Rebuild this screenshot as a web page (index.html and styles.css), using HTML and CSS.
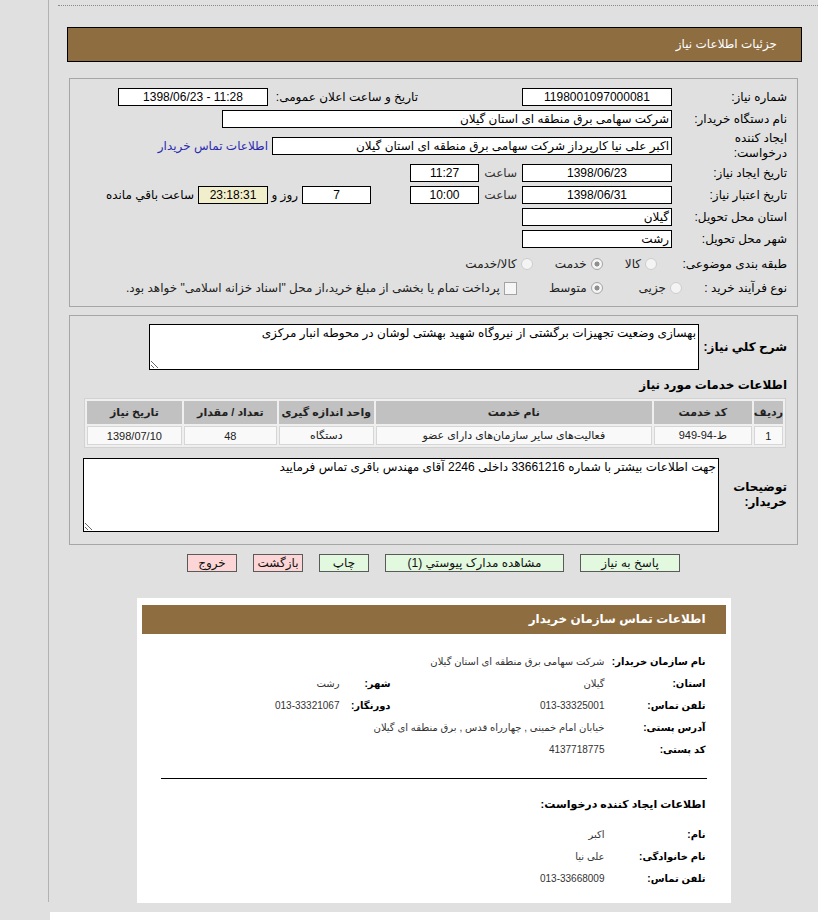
FILE: index.html
```html
<!DOCTYPE html>
<html lang="fa" dir="rtl">
<head>
<meta charset="utf-8">
<title>جزئیات اطلاعات نیاز</title>
<link rel="stylesheet" href="styles.css">
</head>
<body>
<div class="shell">
  <div class="dots"></div>
  <div class="title-bar">جزئیات اطلاعات نیاز</div>

  <div class="panel panel-info">
    <div class="row">
      <span class="lbl">شماره نیاز:</span>
      <span class="box w150 center">1198001097000081</span>
      <span class="lbl-announce">تاریخ و ساعت اعلان عمومی:</span>
      <span class="box w150 center ltr">1398/06/23 - 11:28</span>
    </div>
    <div class="row">
      <span class="lbl">نام دستگاه خریدار:</span>
      <span class="box w450">شرکت سهامی برق منطقه ای استان گیلان</span>
    </div>
    <div class="row row-tall">
      <span class="lbl">ایجاد کننده<br>درخواست:</span>
      <span class="box w400">اکبر علی نیا کارپرداز شرکت سهامی برق منطقه ای استان گیلان</span>
      <a class="contact-link" href="#">اطلاعات تماس خریدار</a>
    </div>
    <div class="row">
      <span class="lbl">تاریخ ایجاد نیاز:</span>
      <span class="box w150 center">1398/06/23</span>
      <span class="unit">ساعت</span>
      <span class="box w69 center">11:27</span>
    </div>
    <div class="row">
      <span class="lbl">تاریخ اعتبار نیاز:</span>
      <span class="box w150 center">1398/06/31</span>
      <span class="unit">ساعت</span>
      <span class="box w69 center">10:00</span>
      <span class="box w69 center days">7</span>
      <span class="unit-days">روز و</span>
      <span class="box w70 center timer">23:18:31</span>
      <span class="remain">ساعت باقي مانده</span>
    </div>
    <div class="row">
      <span class="lbl">استان محل تحویل:</span>
      <span class="box w150">گیلان</span>
    </div>
    <div class="row">
      <span class="lbl">شهر محل تحویل:</span>
      <span class="box w150">رشت</span>
    </div>
    <div class="row row-radio">
      <span class="lbl">طبقه بندی موضوعی:</span>
      <span class="opt opt-first"><span class="radio"></span><span class="opt-text">کالا</span></span>
      <span class="opt"><span class="radio checked"></span><span class="opt-text">خدمت</span></span>
      <span class="opt"><span class="radio"></span><span class="opt-text">کالا/خدمت</span></span>
    </div>
    <div class="row row-radio2">
      <span class="lbl lbl-short">نوع فرآیند خرید :</span>
      <span class="opt opt-flush"><span class="radio"></span><span class="opt-text">جزیی</span></span>
      <span class="opt opt-wide"><span class="radio checked"></span><span class="opt-text">متوسط</span></span>
      <span class="opt opt-check"><span class="checkbox"></span><span class="opt-text">پرداخت تمام یا بخشی از مبلغ خرید،از محل "اسناد خزانه اسلامی" خواهد بود.</span></span>
    </div>
  </div>

  <div class="panel panel-desc">
    <div class="desc-row">
      <span class="lbl-bold lbl-desc">شرح کلي نیاز:</span>
      <textarea class="area area-desc" readonly>بهسازی وضعیت تجهیزات برگشتی از نیروگاه شهید بهشتی لوشان در محوطه انبار مرکزی</textarea>
    </div>
    <div class="section-title">اطلاعات خدمات مورد نیاز</div>
    <table class="items">
      <thead>
        <tr>
          <th class="c-idx">ردیف</th>
          <th class="c-code">کد خدمت</th>
          <th class="c-name">نام خدمت</th>
          <th class="c-unit">واحد اندازه گیری</th>
          <th class="c-qty">تعداد / مقدار</th>
          <th class="c-date">تاریخ نیاز</th>
        </tr>
      </thead>
      <tbody>
        <tr>
          <td>1</td>
          <td>ط-94-949</td>
          <td>فعالیت‌های سایر سازمان‌های دارای عضو</td>
          <td>دستگاه</td>
          <td>48</td>
          <td>1398/07/10</td>
        </tr>
      </tbody>
    </table>
    <div class="desc-row desc-row2">
      <span class="lbl-bold lbl-buyer">توضیحات<br>خریدار:</span>
      <textarea class="area area-buyer" readonly>جهت اطلاعات بیشتر با شماره 33661216 داخلی 2246 آقای مهندس باقری تماس فرمایید</textarea>
    </div>
  </div>

  <div class="buttons">
    <span class="btn btn-green w100">پاسخ به نیاز</span>
    <span class="btn btn-green w179">مشاهده مدارک پیوستي (1)</span>
    <span class="btn btn-green w50">چاپ</span>
    <span class="btn btn-pink w50">بازگشت</span>
    <span class="btn btn-pink w50">خروج</span>
  </div>

  <div class="contact">
    <div class="contact-head">اطلاعات تماس سازمان خریدار</div>
    <div class="contact-grid">
      <div class="c-row"><span class="c-lbl">نام سازمان خریدار:</span><span class="c-val">شرکت سهامی برق منطقه ای استان گیلان</span></div>
      <div class="c-row"><span class="c-lbl">استان:</span><span class="c-val c-val1">گیلان</span><span class="c-lbl2">شهر:</span><span class="c-val">رشت</span></div>
      <div class="c-row"><span class="c-lbl">تلفن تماس:</span><span class="c-val c-val1">013-33325001</span><span class="c-lbl2">دورنگار:</span><span class="c-val">013-33321067</span></div>
      <div class="c-row"><span class="c-lbl">آدرس پستی:</span><span class="c-val">خیابان امام خمینی , چهارراه قدس , برق منطقه ای گیلان</span></div>
      <div class="c-row"><span class="c-lbl">کد پستی:</span><span class="c-val">4137718775</span></div>
    </div>
    <div class="c-rule"></div>
    <div class="c-subhead">اطلاعات ایجاد کننده درخواست:</div>
    <div class="contact-grid grid2">
      <div class="c-row"><span class="c-lbl">نام:</span><span class="c-val">اکبر</span></div>
      <div class="c-row"><span class="c-lbl">نام خانوادگی:</span><span class="c-val">علی نیا</span></div>
      <div class="c-row"><span class="c-lbl">تلفن تماس:</span><span class="c-val">013-33668009</span></div>
    </div>
  </div>
</div>
<div class="footer"></div>
</body>
</html>
```

FILE: styles.css
```css
html, body {
  margin: 0;
  padding: 0;
  background: #e0e0e0;
  height: 920px;
  overflow: hidden;
}

body {
  font-family: "Liberation Sans", "DejaVu Sans", sans-serif;
  font-size: 12px;
  color: #000;
}

.shell {
  margin-left: 48px;
  border-left: 1px solid #b2b2b2;
  height: 902px;
  box-sizing: border-box;
  padding-top: 5px;
}

.dots {
  margin-left: 9px;
  border-top: 1px dotted #8a8a8a;
}

.title-bar {
  margin: 21px 16px 0 18px;
  height: 33px;
  line-height: 33px;
  border: 1px solid #000;
  background: #8e6d41;
  color: #fff;
  padding-right: 24px;
  font-size: 12px;
}

.panel {
  margin: 0 20px;
  border: 1px solid #a6a6a6;
  padding-right: 10px;
  padding-left: 10px;
}

.panel-info {
  margin-top: 16px;
  padding-top: 7px;
  padding-bottom: 8px;
}

.row {
  display: flex;
  align-items: center;
  height: 22px;
  white-space: nowrap;
}

.row-tall { height: 32px; }
.row-radio { height: 28px; }
.row-radio2 { height: 20px; }

.lbl {
  width: 115px;
  flex: none;
  line-height: 15px;
}

.lbl-short { width: 105px; }

.box {
  flex: none;
  box-sizing: border-box;
  height: 18px;
  line-height: 16px;
  border: 1px solid #000;
  background: #fff;
  padding: 0 2px;
  overflow: hidden;
}

.center { text-align: center; }
.ltr { direction: ltr; }
.w150 { width: 150px; }
.w450 { width: 450px; }
.w400 { width: 400px; }
.w69 { width: 69px; }
.w70 { width: 70px; }

.lbl-announce {
  flex: none;
  width: 146px;
  margin-right: 104px;
  margin-left: 4px;
}

.contact-link {
  margin-right: 4px;
  color: #2a2ab0;
  text-decoration: none;
}

.unit {
  flex: none;
  width: 43px;
  box-sizing: border-box;
  padding-right: 5px;
  color: #333;
}

.days { margin-right: 39px; }

.unit-days {
  flex: none;
  width: 34px;
  box-sizing: border-box;
  padding-right: 4px;
}

.timer { background: #f0eecb; }

.remain {
  margin-right: 4px;
}

.opt {
  display: flex;
  align-items: center;
  margin-right: 22px;
}

.opt-first { margin-right: 15px; }
.opt-flush { margin-right: 0; }
.opt-wide { margin-right: 36px; }
.opt-check { margin-right: 32px; }

.opt-text {
  margin-right: 4px;
  color: #222;
}

.radio {
  display: inline-block;
  width: 12px;
  height: 12px;
  box-sizing: border-box;
  border-radius: 50%;
  border: 1px solid #cdcdcd;
  background: #f4f4f4;
}

.radio.checked {
  border-color: #a5a5a5;
  background: radial-gradient(circle, #8f8f8f 0 2.2px, #f4f4f4 2.8px);
}

.checkbox {
  display: inline-block;
  width: 13px;
  height: 13px;
  box-sizing: border-box;
  border: 1px solid #a3a3a3;
  background: #f6f6f6;
}

.panel-desc {
  margin-top: 8px;
  padding-top: 8px;
  padding-bottom: 12px;
}

.desc-row {
  display: flex;
  align-items: center;
}

.lbl-bold {
  font-weight: bold;
  font-size: 12px;
  line-height: 15px;
}

.lbl-desc { width: 88px; flex: none; }
.lbl-buyer { width: 68px; flex: none; }

.area {
  display: block;
  box-sizing: border-box;
  border: 1px solid #000;
  background: #fff;
  font-family: "Liberation Sans", "DejaVu Sans", sans-serif;
  font-size: 12px;
  line-height: 15px;
  padding: 1px 2px;
  margin: 0;
  resize: both;
  overflow: hidden;
  color: #000;
}

.area-desc { width: 550px; height: 46px; }
.area-buyer { width: 636px; height: 74px; }

.section-title {
  margin-top: 7px;
  height: 16px;
  line-height: 16px;
  font-weight: bold;
}

.items {
  margin-top: 5px;
  margin-right: 1px;
  width: 702px;
  border-collapse: separate;
  border-spacing: 2px;
  border: 1px solid #d2d2d2;
  background: #efefef;
  font-size: 11px;
}

.items th {
  background: #c1c1c1;
  height: 23px;
  padding: 0;
  font-weight: bold;
  color: #222;
}

.items td {
  background: #f9f9f9;
  height: 17px;
  padding: 0;
  text-align: center;
  border: 1px solid #d6d6d6;
  color: #222;
}

.c-idx { width: 24px; }
.c-code { width: 98px; }
.c-name { width: 276px; }
.c-unit { width: 95px; }
.c-qty { width: 93px; }

.desc-row2 { margin-top: 10px; }

.buttons {
  margin-top: 9px;
  display: flex;
  justify-content: center;
  gap: 16px;
}

.btn {
  box-sizing: border-box;
  height: 18px;
  line-height: 16px;
  border: 1px solid #5a5a5a;
  text-align: center;
  font-size: 12px;
  color: #111;
}

.btn-green { background: #e2f9e0; }
.btn-pink { background: #fcd6d6; }
.w100 { width: 100px; }
.w179 { width: 179px; }
.w50 { width: 50px; }

.contact {
  margin: 26px auto 0;
  width: 594px;
  height: 305px;
  box-sizing: border-box;
  background: #fff;
  padding: 7px 5px 0;
}

.contact-head {
  height: 29px;
  line-height: 29px;
  background: #8e6d41;
  color: #fff;
  font-weight: bold;
  padding-right: 20px;
  font-size: 12px;
}

.contact-grid {
  margin-top: 16px;
  padding-right: 20px;
  font-size: 10px;
}

.grid2 { margin-top: 8px; }

.c-row {
  display: flex;
  align-items: center;
  height: 22px;
  white-space: nowrap;
}

.c-lbl {
  width: 101px;
  flex: none;
  font-weight: bold;
  font-size: 10px;
  color: #000;
}

.c-val {
  color: #333;
}

.c-val1 {
  width: 214px;
  flex: none;
}

.c-lbl2 {
  width: 51px;
  flex: none;
  font-weight: bold;
  font-size: 10px;
}

.c-rule {
  margin: 18px 19px 0;
  border-top: 1px solid #000;
}

.c-subhead {
  margin-top: 14px;
  padding-right: 20px;
  height: 22px;
  line-height: 22px;
  font-weight: bold;
  font-size: 11px;
}

.footer {
  margin-top: 10px;
  margin-left: 50px;
  height: 8px;
  background: #fff;
}
```
